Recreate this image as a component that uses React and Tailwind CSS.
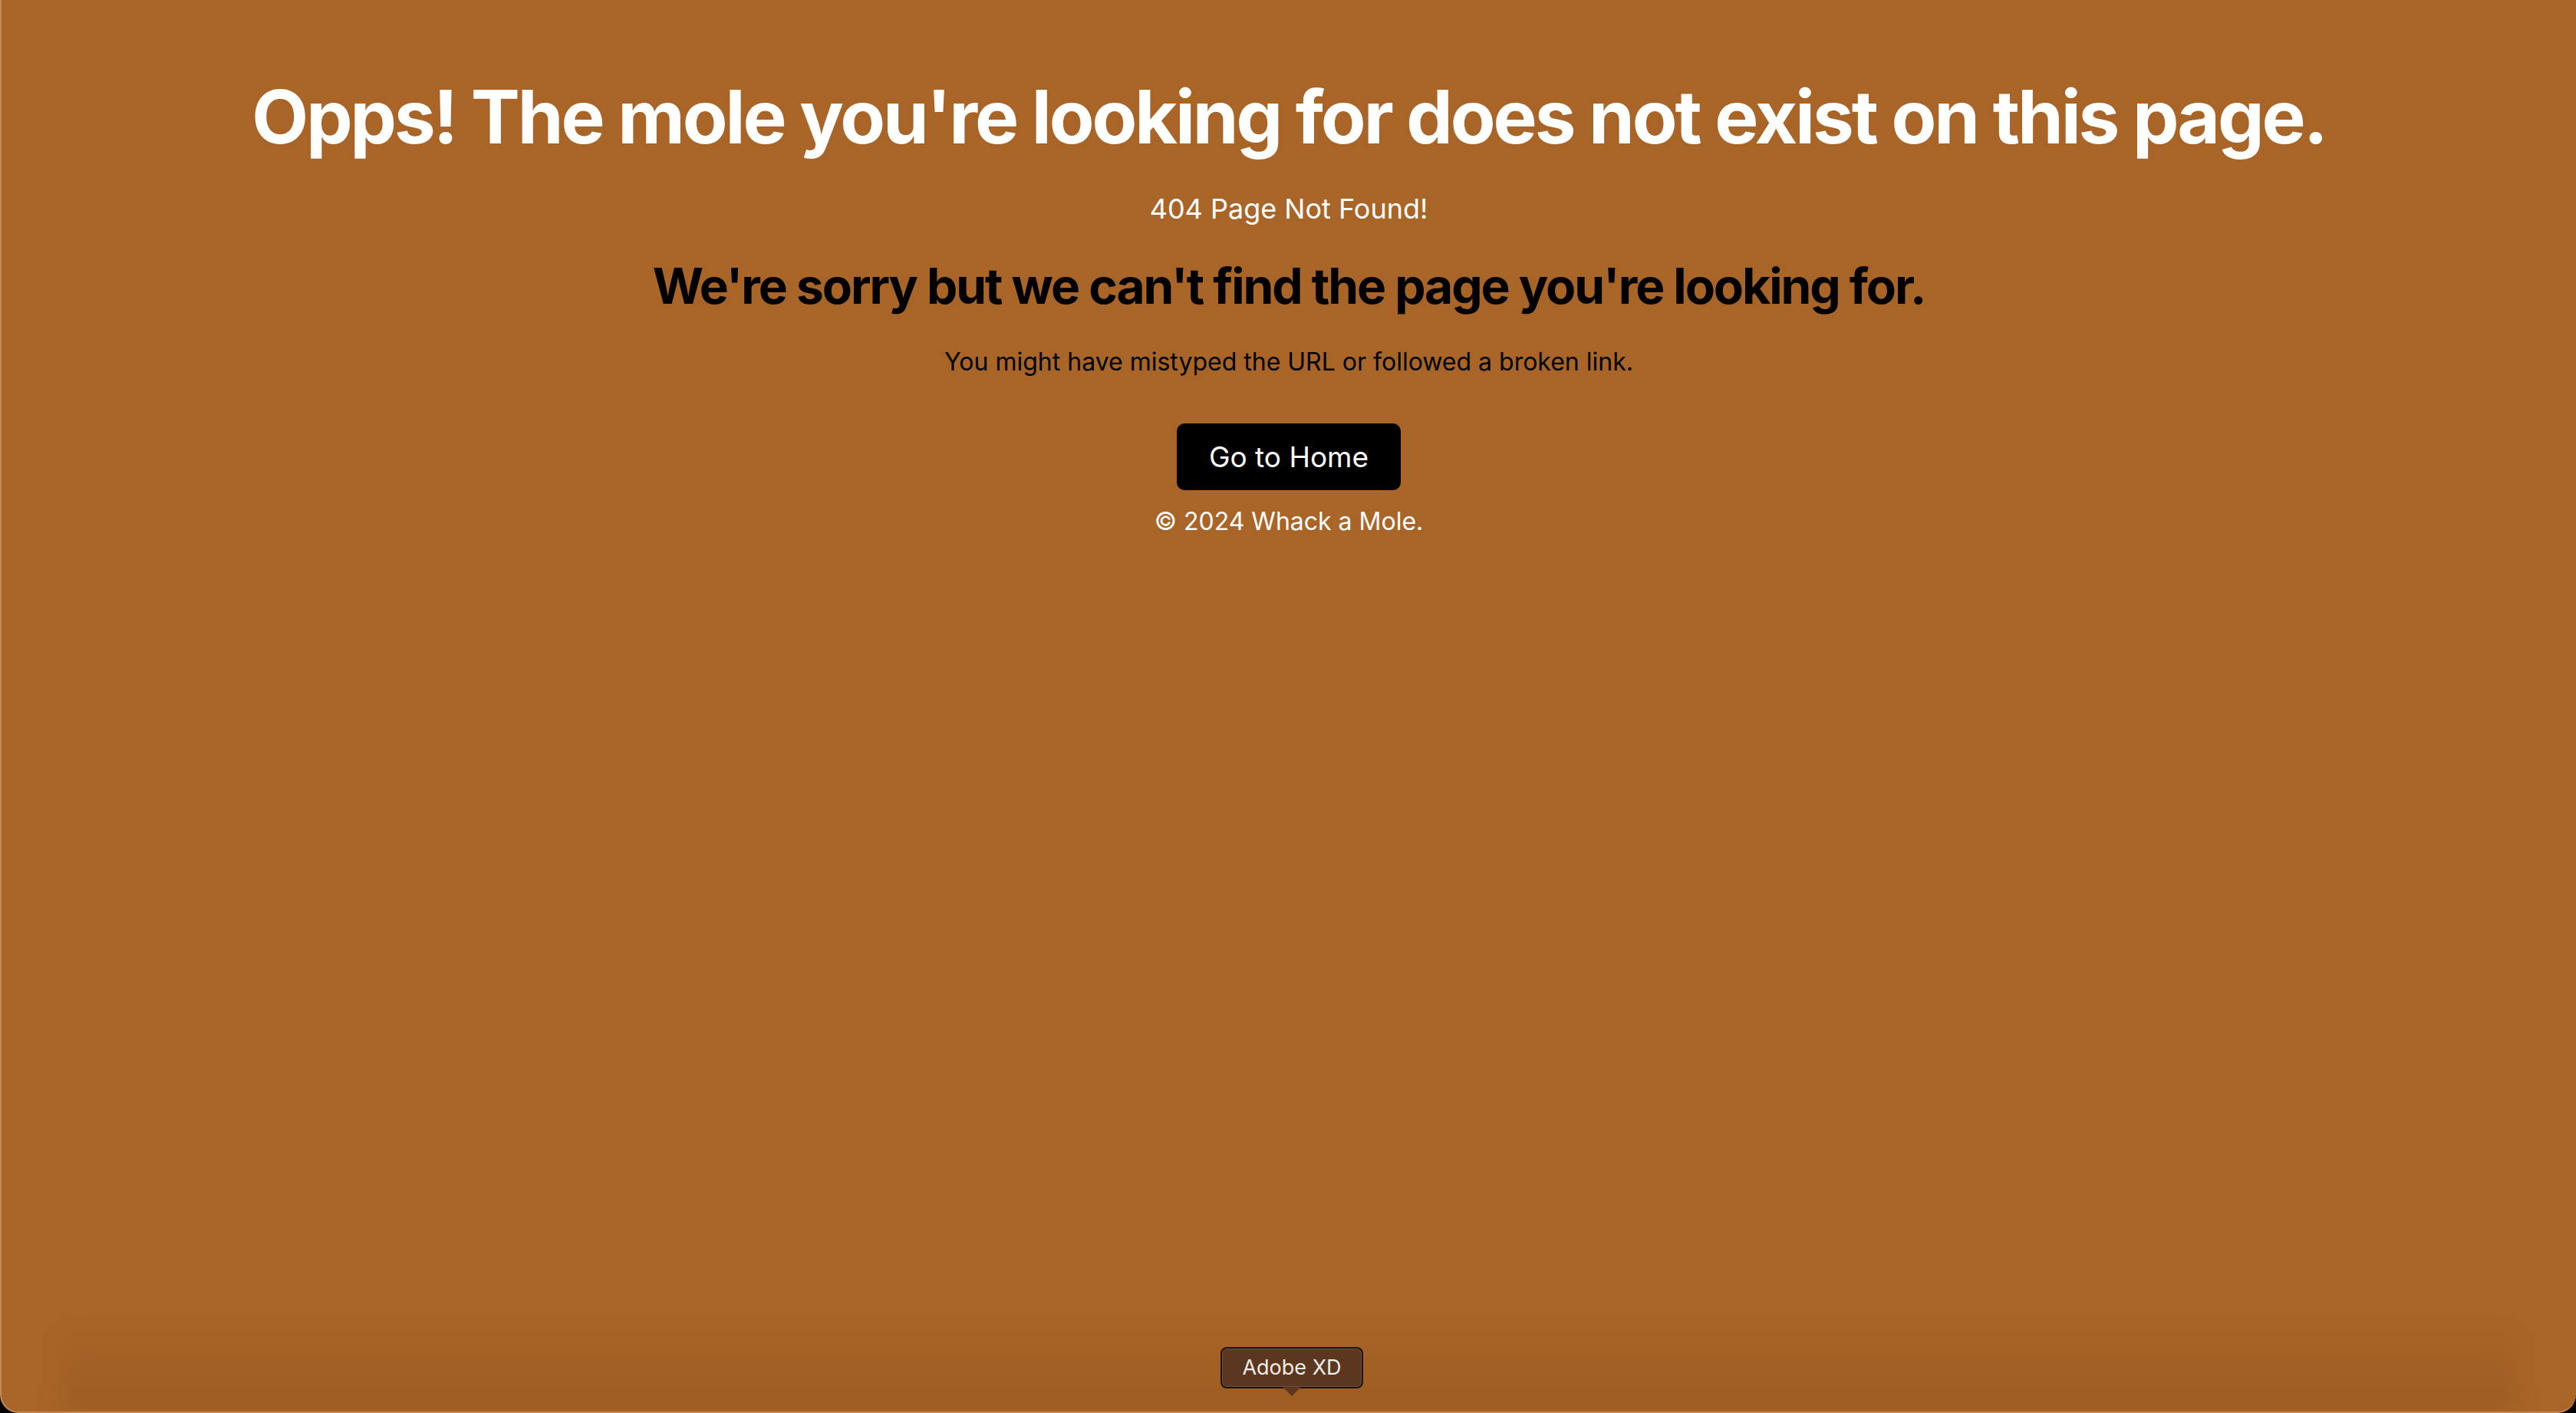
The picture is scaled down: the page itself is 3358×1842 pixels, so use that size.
import React from 'react';

const NotFound = () => {
  return (
    <div className="flex flex-col items-center pt-[104px] text-center">
      <h1 className="text-[96px] font-bold leading-none tracking-[-0.032em] text-white">
        Opps! The mole you're looking for does not exist on this page.
      </h1>
      <p className="mt-[54px] text-[36px] leading-none text-white">404 Page Not Found!</p>
      <h2 className="mt-[51px] text-[64px] font-bold leading-none tracking-[-0.032em] text-black">
        We're sorry but we can't find the page you're looking for.
      </h2>
      <p className="mt-[51px] text-[32px] leading-none text-black">
        You might have mistyped the URL or followed a broken link.
      </p>
      <a
        href="#"
        className="mt-[64px] flex h-[87px] w-[292px] items-center justify-center rounded-[10px] bg-black text-[37px] text-white"
      >
        Go to Home
      </a>
      <p className="mt-[25px] text-[32px] leading-none text-white">© 2024 Whack a Mole.</p>
    </div>
  );
};

const DockTooltip = () => (
  <div className="absolute bottom-[20px] left-[1589px] flex flex-col items-center">
    <div className="flex h-[54px] w-[186px] items-center justify-center rounded-[8px] border-2 border-[#1c1410] bg-[#5b3720] text-[27px] text-[#f3ece6] shadow-[inset_0_0_0_1px_rgba(255,255,255,0.12)]">
      Adobe XD
    </div>
    <div className="-mt-[2px] h-0 w-0 border-x-[12px] border-t-[12px] border-x-transparent border-t-[#5b3720]" />
  </div>
);

export default function App() {
  return (
    <div
      className="h-[1842px] w-[3358px] overflow-hidden bg-black"
      style={{ fontFamily: 'Inter, "Noto Sans", sans-serif' }}
    >
      <div className="relative h-full w-full overflow-hidden rounded-b-[24px] border-l-2 border-b-2 border-l-[#c48a5a] border-b-[#c08855] bg-[#a96527]">
        <div className="pointer-events-none absolute inset-x-[80px] bottom-0 h-[110px] bg-gradient-to-b from-transparent to-[#8a4e1a]/40 blur-md" />
        <NotFound />
        <DockTooltip />
      </div>
    </div>
  );
}
